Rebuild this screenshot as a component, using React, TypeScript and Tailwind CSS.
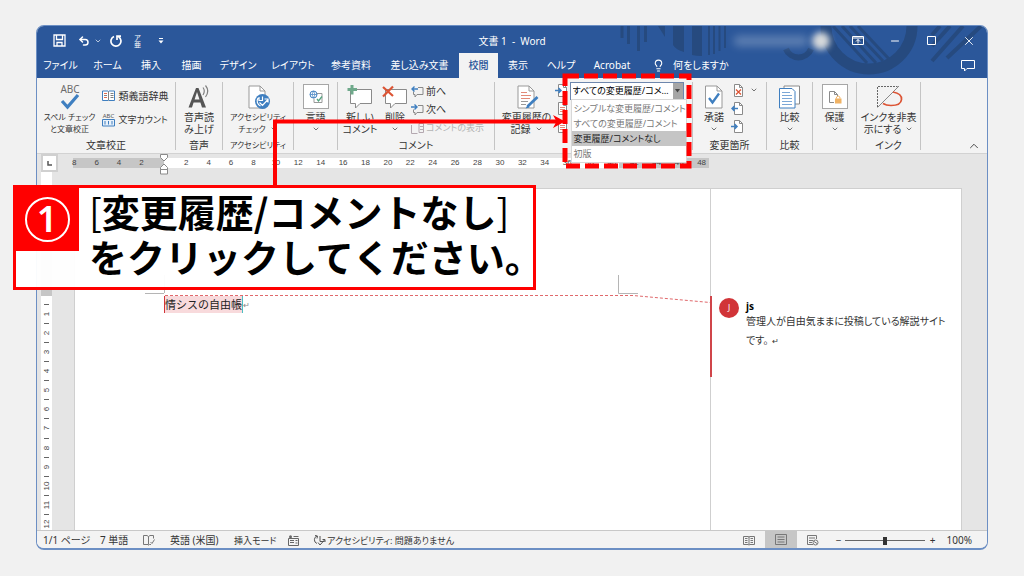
import type { ReactNode } from "react";
import { ChevronDown, ChevronUp, Lightbulb, Minus, RotateCcw, Undo2, X } from "lucide-react";

const tabs = [
  { label: "ファイル", width: "w-[47px]" },
  { label: "ホーム", width: "w-[47px]" },
  { label: "挿入", width: "w-10" },
  { label: "描画", width: "w-[41px]" },
  { label: "デザイン", width: "w-[52px]" },
  { label: "レイアウト", width: "w-[58px]" },
  { label: "参考資料", width: "w-[58px]" },
  { label: "差し込み文書", width: "w-[79px]" },
  { label: "校閲", width: "w-[39px]", active: true },
  { label: "表示", width: "w-10" },
  { label: "ヘルプ", width: "w-[46px]" },
  { label: "Acrobat", width: "w-14" },
];

const rulerMarks = [8, 6, 4, 2, 0, 2, 4, 6, 8, 10, 12, 14, 16, 18, 20, 22, 24, 26, 28, 30, 32, 34, 36, 38, 40, 42, 44, 46, 48];

const views = [
  "シンプルな変更履歴/コメント",
  "すべての変更履歴/コメント",
  "変更履歴/コメントなし",
  "初版",
];

function Group({ label, width, small, children }: { label?: string; width: string; small?: boolean; children: ReactNode }) {
  return (
    <section className={`${width} mt-1 mb-[3px] flex shrink-0 flex-col border-r border-[#c4c4c4]`}>
      <div className="flex min-h-0 flex-1 justify-center">{children}</div>
      <div className={`h-[10px] shrink-0 text-center leading-[10px] ${small ? "text-[8px]" : ""}`}>{label}</div>
    </section>
  );
}

function BigButton({ icon, lines, width, drop, small }: { icon: ReactNode; lines: string[]; width: string; drop?: boolean; small?: boolean }) {
  return (
    <button className={`${width} flex shrink-0 flex-col items-center leading-3 ${small ? "text-[8px]" : ""}`}>
      <span className="flex h-[29px] items-center justify-center">{icon}</span>
      {lines.map((line, i) => (
        <span key={line} className="flex items-center gap-1">
          {line}
          {drop && lines.length > 1 && i === lines.length - 1 && <ChevronDown className="size-2" />}
        </span>
      ))}
      {drop && lines.length === 1 && <ChevronDown className="mt-0.5 size-2" />}
    </button>
  );
}

function FramedIcon({ children }: { children: ReactNode }) {
  return <span className="flex h-[25px] w-[26px] items-center justify-center border border-[#a6a6a6] bg-white">{children}</span>;
}

function SpellIcon() {
  return (
    <svg width="26" height="28" viewBox="0 0 26 28" overflow="visible">
      <text x="13" y="10" textAnchor="middle" fontSize="10" fill="#6b6b6b" fontFamily="Noto Sans">ABC</text>
      <path d="M5 18l5.5 6L21 12" fill="none" stroke="#3f7fc0" strokeWidth="3.2" />
    </svg>
  );
}

function ThesaurusIcon() {
  return (
    <svg width="13" height="12" viewBox="0 0 13 12" fill="none">
      <path d="M.5 1h5.5l.5.5.5-.5h5.500v9.500H7l-.5.5-.5-.5H.5z" fill="#fff" stroke="#3f7fc0" />
      <path d="M6.500 1.500v9M8.500 3.500h3M8.500 5.500h3M8.500 7.500h3" stroke="#808080" />
      <path d="M2 3.500h3M2 7.500h3" stroke="#e06a50" />
      <path d="M2 5.500h3" stroke="#808080" />
    </svg>
  );
}

function CountIcon() {
  return (
    <svg width="13" height="14" viewBox="0 0 13 14" overflow="visible">
      <text x="6.500" y="5" textAnchor="middle" fontSize="6" fill="#555" fontFamily="Noto Sans">ABC</text>
      <path d="M.5 6.500h12v6.500H.5z" fill="#e9f1fa" stroke="#3f7fc0" />
      <path d="M3 8v3.500M6.500 8v3.500M10 8v3.500" stroke="#3f7fc0" />
    </svg>
  );
}

function ReadAloudIcon() {
  return (
    <svg width="26" height="26" viewBox="0 0 26 26">
      <path d="M2.500 23.500L10 4h2.500L20 23.500h-4l-1.600-5H7.600l-1.600 5zM8.600 15.500h4.900L11 8z" fill="#555" />
      <path d="M17 3.500q2.600 3.500 0 7.500M19.500 1.500q4.500 5.500 0 11.500" fill="none" stroke="#808080" strokeWidth="1.200" />
    </svg>
  );
}

function AccessIcon() {
  return (
    <svg width="26" height="26" viewBox="0 0 26 26" fill="none">
      <path d="M4 2h11l5 5v17H4z" fill="#fff" stroke="#999" />
      <path d="M15 2v5h5" stroke="#999" />
      <circle cx="17.500" cy="17.500" r="7.500" fill="#3f7fc0" />
      <path d="M13 14a5.500 5.500 0 0 0 2.500 8M14 13v3.500h3.500v-4M14.500 18.500l3 3 5-5.500M19.500 15h3.500v3.500" stroke="#fff" strokeWidth="1.200" />
    </svg>
  );
}

function LanguageIcon() {
  return (
    <svg width="14" height="13" viewBox="0 0 14 13" fill="none">
      <path d="M7 3.500h6v9H5v-4" stroke="#999" />
      <circle cx="4.500" cy="4.500" r="3.500" fill="#fff" stroke="#3f7fc0" />
      <path d="M1 4.500h7M4.500 1q-3 3.500 0 7M4.500 1q3 3.500 0 7" stroke="#3f7fc0" strokeWidth=".7" />
      <path d="M8 9l1.500 2L13 6.500" stroke="#52a37f" strokeWidth="1.300" />
    </svg>
  );
}

function CommentIcon({ remove }: { remove?: boolean }) {
  return (
    <svg width="26" height="26" viewBox="0 0 26 26" fill="none">
      <path d="M3.500 5.500h21v14H13l-4.500 4.500v-4.500h-5z" fill="#fff" stroke="#8a8a8a" />
      {remove ? (
        <path d="M1 3l10 9M11 2.500L1 12.500" stroke="#dc5434" strokeWidth="2.200" />
      ) : (
        <path d="M5 1v9.500M.5 5.500h9.500" stroke="#6fa98b" strokeWidth="3" />
      )}
    </svg>
  );
}

function StepComment({ next }: { next?: boolean }) {
  return (
    <svg width="13" height="13" viewBox="0 0 13 13" fill="none">
      <path d="M7 2.500h5v7H6l-2 2.500V9.500H2.500V6.500" stroke="#8a8a8a" />
      <path d={next ? "M0 4h6M3.500 1.500L6 4 3.500 6.500" : "M1 4h6M3.500 1.500L1 4l2.500 2.500"} stroke="#3f7fc0" strokeWidth="1.400" />
    </svg>
  );
}

function TrackIcon() {
  return (
    <svg width="26" height="26" viewBox="0 0 26 26" fill="none">
      <path d="M4 2h11l5 5v17H4z" fill="#fff" stroke="#999" />
      <path d="M15 2v5h5M7 17.500h7M7 20.500h5" stroke="#999" />
      <path d="M7 8.500h6M7 11.500h10M7 14.500h9" stroke="#e28a78" />
      <path d="M23.500 13l-10 9.500" stroke="#3f7fc0" strokeWidth="2.800" />
      <path d="M13.500 21l-2 3.500 4-1z" fill="#3f7fc0" />
    </svg>
  );
}

function SmallDoc({ mark }: { mark: "reject" | "prev" | "next" | "lines" }) {
  return (
    <svg width="13" height="13" viewBox="0 0 13 13" fill="none">
      <path d="M3.500.5h5l3 3v9h-8z" fill="#fff" stroke="#8a8a8a" />
      <path d="M8.500.5v3h3" stroke="#8a8a8a" />
      {mark === "reject" && <path d="M5 5.500l5 5M10 5.500l-5 5" stroke="#dc5434" strokeWidth="1.300" />}
      {mark === "prev" && <path d="M1 6.500h6M3.500 4L1 6.500 3.500 9" stroke="#3f7fc0" strokeWidth="1.500" />}
      {mark === "next" && <path d="M0 6.500h6M3.500 4L6 6.500 3.500 9" stroke="#3f7fc0" strokeWidth="1.500" />}
      {mark === "lines" && <path d="M5 5.500h5M5 7.500h5M5 9.500h5" stroke="#e28a78" />}
    </svg>
  );
}

function AcceptIcon() {
  return (
    <svg width="20" height="26" viewBox="0 0 20 26" fill="none">
      <path d="M1.500 2H13l5 5v17H1.500z" fill="#fff" stroke="#999" />
      <path d="M13 2v5h5" stroke="#999" />
      <path d="M5 14l3.500 4.500L15 9.500" stroke="#3f7fc0" strokeWidth="2.300" />
    </svg>
  );
}

function CompareIcon() {
  return (
    <svg width="24" height="26" viewBox="0 0 24 26" fill="none">
      <path d="M6 2h15.500v18H6z" fill="#fff" stroke="#8a8a8a" />
      <path d="M1.500 4.500h12.500l3 3V24H1.500z" fill="#fff" stroke="#3f7fc0" />
      <path d="M4 8.500h8M4 11.500h10M4 14.500h10M4 17.500h10M4 20.500h10" stroke="#7ba7d6" />
    </svg>
  );
}

function ProtectIcon() {
  return (
    <svg width="14" height="14" viewBox="0 0 14 14" fill="none">
      <path d="M6 12.500H1.500V1.500h5l3 3V6M6.500 1.500v3h3" stroke="#8a8a8a" />
      <rect x="7" y="8.500" width="6.500" height="5" fill="#f0b264" />
      <path d="M8.500 8.500V7q1.700-2 3.400 0v1.500" stroke="#f0b264" />
    </svg>
  );
}

function InkIcon() {
  return (
    <svg width="28" height="26" viewBox="0 0 28 26" fill="none">
      <path d="M2.500 23V2.500h20" stroke="#666" strokeDasharray="2 1" />
      <path d="M2.500 23.500L24 2" stroke="#888" />
      <path d="M18 8q9 1.500 8.500 7.500T16 21.500q-5 0-8-2" stroke="#dc5434" strokeWidth="1.700" />
    </svg>
  );
}

function TitleArt() {
  return (
    <svg className="absolute top-0 right-0" width="380" height="52" viewBox="607 26 380 52" fill="none" stroke="#264a7f">
      <path d="M622 26v12M628.500 26v18M638.500 26v25M645.500 26v16" strokeWidth="3" />
      <path d="M658 26h7v11z" fill="#264a7f" stroke="none" />
      <path d="M673 26h11v26q-8-2-11-7zM692 26h10v30q-6 0-10-1z" fill="#264a7f" stroke="none" />
      <path d="M709 26v29M714 26v28M719.500 26v25M725 26v22" strokeWidth="2" />
      <path d="M786 49a13.500 13.500 0 0 0 25 0" strokeWidth="6" />
      <circle cx="869" cy="26" r="43" strokeWidth="11" />
      <path d="M833 26l34 37M842 26l34 37M850 26l33 35M858 26l31 33" strokeWidth="3" />
      <path d="M963 26l-31 35M950 26l-18 20M940 26l-8 9M981 26l-34 32" strokeWidth="4" />
    </svg>
  );
}

function TitleBar() {
  return (
    <header className="relative bg-[#2b579a] text-white">
      <TitleArt />
      <div className="relative grid h-[27px] grid-cols-[1fr_auto_1fr] items-center pt-0.5">
        <div className="flex items-center pl-4">
          <button aria-label="保存">
            <svg width="13" height="13" viewBox="0 0 13 13" fill="none" stroke="#fff" strokeWidth="1.300">
              <path d="M1 1h11v11H1zM3.500 1v4.500h6V1M4 12V8.500h5V12" />
            </svg>
          </button>
          <button className="ml-3" aria-label="元に戻す"><Undo2 className="size-3" strokeWidth={3} /></button>
          <ChevronDown className="ml-1 size-2" />
          <button className="ml-2" aria-label="繰り返し">
            <svg width="12" height="12" viewBox="0 0 12 12" fill="none" stroke="#fff" strokeWidth="1.700">
              <path d="M4 1.500a5 5 0 1 0 4.500.3M7 5V1.200h4" />
            </svg>
          </button>
          <button className="ml-3 flex flex-col items-center text-[7px] leading-[7px]" aria-label="ルビ">
            <span>ア</span>
            <span>亜</span>
          </button>
          <button className="ml-4" aria-label="カスタマイズ">
            <svg width="8" height="8" viewBox="0 0 8 8"><path d="M2 1h4v1H2zM1.500 3.500h5L4 6.500z" fill="#fff" /></svg>
          </button>
        </div>
        <h1 className="pt-px">文書 1&nbsp; -&nbsp; Word</h1>
        <div className="flex items-center justify-end">
          <div className="mr-[9px] flex items-center gap-1">
            <span className="h-[10px] w-[74px] rounded bg-white/25 blur-[4px]" />
            <span className="size-[18px] rounded-full bg-[#d5d8da] blur-[3px]" />
          </div>
          <button className="flex w-[37px] justify-center" aria-label="リボンの表示">
            <svg width="12" height="9" viewBox="0 0 12 9" fill="none" stroke="#fff">
              <path d="M.5.5h11v8H.5zM.5 2h11M6 7.500v-4M4 5.500l2-2 2 2" />
            </svg>
          </button>
          <button className="flex w-[37px] justify-center" aria-label="最小化"><Minus className="size-3" /></button>
          <button className="flex w-[37px] justify-center" aria-label="最大化">
            <svg width="9" height="9" viewBox="0 0 9 9" fill="none" stroke="#fff"><path d="M.5.5h8v8h-8z" /></svg>
          </button>
          <button className="flex w-[37px] justify-center" aria-label="閉じる"><X className="size-[14px]" strokeWidth={1.5} /></button>
        </div>
      </div>
      <nav className="relative flex h-[25px] items-stretch">
        {tabs.map((tab) => (
          <button
            key={tab.label}
            className={`${tab.width} shrink-0 ${tab.active ? "bg-[#f3f3f3] font-medium text-[#2b579a]" : ""}`}
          >
            {tab.label}
          </button>
        ))}
        <button className="flex items-center gap-2 pl-3">
          <Lightbulb className="size-[13px]" />
          何をしますか
        </button>
        <button className="mr-3 ml-auto" aria-label="コメント">
          <svg width="14" height="12" viewBox="0 0 14 12" fill="none" stroke="#fff"><path d="M.5.5h13v8H6l-2.500 2.500V8.500h-3z" /></svg>
        </button>
      </nav>
    </header>
  );
}

function Ribbon() {
  return (
    <div className="flex h-[76px] border-b border-[#d2d2d2] bg-[#f3f3f3]">
      <Group label="文章校正" width="w-[139px]">
        <BigButton icon={<SpellIcon />} lines={["スペル チェック", "と文章校正"]} width="w-16" small />
        <div className="flex w-[73px] flex-col items-start gap-2 pt-1.5">
          <button className="flex h-4 items-center gap-1"><ThesaurusIcon />類義語辞典</button>
          <button className="flex h-4 items-center gap-1 text-[9px]"><CountIcon />文字カウント</button>
        </div>
      </Group>
      <Group label="音声" width="w-[47px]">
        <BigButton icon={<ReadAloudIcon />} lines={["音声読", "み上げ"]} width="w-[46px]" />
      </Group>
      <Group label="アクセシビリティ" width="w-[71px]" small>
        <BigButton icon={<AccessIcon />} lines={["アクセシビリティ", "チェック"]} width="w-[70px]" drop small />
      </Group>
      <Group width="w-11">
        <BigButton icon={<FramedIcon><LanguageIcon /></FramedIcon>} lines={["言語"]} width="w-[43px]" drop />
      </Group>
      <Group label="コメント" width="w-[157px]">
        <BigButton icon={<CommentIcon />} lines={["新しい", "コメント"]} width="w-[38px]" />
        <BigButton icon={<CommentIcon remove />} lines={["削除"]} width="w-8" drop />
        <div className="flex w-20 flex-col items-start">
          <button className="flex h-[18px] shrink-0 items-center gap-0.5"><StepComment />前へ</button>
          <button className="flex h-[18px] shrink-0 items-center gap-0.5"><StepComment next />次へ</button>
          <button className="flex h-5 shrink-0 items-center gap-0.5 text-[9px] text-[#b4b4b4]" disabled>
            <svg width="13" height="11" viewBox="0 0 13 11" fill="none" stroke="#b4a8b0"><path d="M.5 2v8.500h6M8 .5h4.500v9H8zM9 3.500h3M9 6.500h3" /></svg>
            コメントの表示
          </button>
        </div>
      </Group>
      <Group width="w-[198px]">
        <BigButton icon={<TrackIcon />} lines={["変更履歴の", "記録"]} width="w-14" drop />
        <div className="flex flex-col gap-[5px] pt-0.5">
          <SmallDoc mark="next" />
          <SmallDoc mark="lines" />
          <SmallDoc mark="lines" />
        </div>
        <MarkupPicker />
      </Group>
      <Group label="変更箇所" width="w-[74px]">
        <BigButton icon={<AcceptIcon />} lines={["承諾"]} width="w-[34px]" drop />
        <div className="flex flex-col gap-[5px] pt-0.5">
          <SmallDoc mark="reject" />
          <SmallDoc mark="prev" />
          <SmallDoc mark="next" />
        </div>
        <ChevronDown className="mt-1 mr-1 ml-1.5 size-2" />
      </Group>
      <Group label="比較" width="w-[46px]">
        <BigButton icon={<CompareIcon />} lines={["比較"]} width="w-[45px]" drop />
      </Group>
      <Group width="w-11">
        <BigButton icon={<FramedIcon><ProtectIcon /></FramedIcon>} lines={["保護"]} width="w-[43px]" drop />
      </Group>
      <Group label="インク" width="w-16">
        <BigButton icon={<InkIcon />} lines={["インクを非表", "示にする"]} width="w-[63px]" drop />
      </Group>
      <button className="mr-1.5 ml-auto self-end" aria-label="リボンを折りたたむ"><ChevronUp className="size-[14px]" strokeWidth={1.5} /></button>
    </div>
  );
}

function MarkupPicker() {
  return (
    <div className="relative mr-[5px] ml-0.5 h-[18px] w-[114px] shrink-0">
      <select
        aria-label="変更内容の表示"
        className="h-[18px] w-full appearance-none border border-[#6e87ad] bg-white pl-0.5 text-[9px] text-black"
      >
        <option>すべての変更履歴/コメ…</option>
      </select>
      <span className="pointer-events-none absolute top-px right-px flex h-4 w-[10px] items-center justify-center bg-[#a6a6a6]">
        <svg width="5" height="4" viewBox="0 0 5 4"><path d="M0 0h5L2.500 3.500z" fill="#444" /></svg>
      </span>
      <ul role="listbox" className="absolute top-[17px] left-px z-20 w-[116px] border border-[#d8d8d8] bg-white py-px text-[9px] text-[#777]">
        {views.map((view) => (
          <li
            key={view}
            role="option"
            aria-selected={view === views[2]}
            className={`h-[15px] pl-0.5 leading-[15px] ${view === views[2] ? "bg-[#c5c5c5] text-[#222]" : ""}`}
          >
            {view}
          </li>
        ))}
      </ul>
    </div>
  );
}

function HorizontalRuler() {
  return (
    <div className="flex h-[18px] items-start pl-1">
      <div className="flex h-[18px] w-[17px] items-center justify-center border-2 border-[#d0d0d0] bg-white">
        <svg width="5" height="5" viewBox="0 0 5 5"><path d="M1 0v4h4" fill="none" stroke="#555" strokeWidth="1.500" /></svg>
      </div>
      <div className="relative mt-1 ml-[15px] flex h-[10px] w-[636px] text-[8px] leading-[10px] text-[#444]">
        <div className="w-[91px] bg-[#c6c6c6]" />
        <div className="flex-1 bg-white" />
        <div className="w-[90px] bg-[#c6c6c6]" />
        <div className="absolute inset-y-0 -right-1 -left-[10px] flex font-['Liberation_Sans']">
          {rulerMarks.map((n, i) => (
            <span key={i} className="flex flex-1 justify-center">
              {n !== 0 ? n : (
                <svg className="-mt-1 shrink-0" width="8" height="21" viewBox="0 0 8 21" fill="#fff" stroke="#8a8a8a">
                  <path d="M.5.500h7v3L4 7 .5 3.500zM4 10l3.500 3.500v2h-7v-2zM.5 15.500h7v4.500h-7z" />
                </svg>
              )}
            </span>
          ))}
        </div>
      </div>
    </div>
  );
}

function VerticalRuler() {
  return (
    <div className="ml-1 flex w-[11px] flex-col bg-white pt-4">
      <div className="h-[108px] shrink-0 bg-[#c6c6c6]" />
      <div className="flex h-[233px] shrink-0 flex-col pt-1 font-['Liberation_Sans'] text-[8px] text-[#444]">
        {[1, 2, 3, 4, 5, 6, 7, 8, 9, 10, 11, 12].map((n) => (
          <div key={n} className="flex flex-1 flex-col items-center">
            <span className="mt-1 h-px w-[5px] shrink-0 bg-[#666]" />
            <span className="mt-1 flex h-[10px] w-[10px] shrink-0 -rotate-90 items-center justify-center">{n}</span>
          </div>
        ))}
      </div>
    </div>
  );
}

function Page() {
  return (
    <main className="relative mt-4 mr-[25px] ml-[22px] flex flex-1 border border-b-0 border-[#cfcfcf] bg-white">
      <svg className="absolute top-0 left-0" width="640" height="190" viewBox="0 0 640 190" fill="none">
        <path d="M70 104.500h19M89.500 86v18M543.500 86v18.500H563" stroke="#b5b5b5" />
        <path d="M90 106.500h468l77 7" stroke="#e0696c" strokeDasharray="3 2" />
      </svg>
      <div className="flex-1 pt-[107px] pl-[89px]">
        <p className="flex text-[11px] leading-[17px] text-[#222] [font-feature-settings:normal]">
          <span className="border-r border-l border-l-[#d13438] border-r-[#4bbfc3] bg-[#f8dadc]">情シスの自由帳</span>
          <span className="text-[8px] text-[#888]">↵</span>
        </p>
      </div>
      <aside className="w-[251px] border-l border-[#cfcfcf] pt-[107px]">
        <div className="-ml-px flex h-[81px] border-l-2 border-[#d0454a] pl-[7px]">
          <span className="mt-0.5 flex size-5 shrink-0 items-center justify-center rounded-full bg-[#d13438] text-[8px] text-white">J</span>
          <div className="pl-[7px]">
            <p className="pt-1 leading-3 font-bold text-black">js</p>
            <p className="leading-[19px] text-[#333]">
              管理人が自由気ままに投稿している解説サイト
              <br />
              です。<span className="pl-1 text-[8px]">↵</span>
            </p>
          </div>
        </div>
      </aside>
    </main>
  );
}

function StatusBar() {
  return (
    <footer className="flex h-[18px] items-center border-t border-[#c8c8c8] bg-[#f3f3f3] pt-0.5 pl-1.5 text-[#333]">
      <span className="w-[57px]">1/1 ページ</span>
      <span className="w-[43px]">7 単語</span>
      <svg className="mr-[15px]" width="12" height="11" viewBox="0 0 12 11" fill="none" stroke="#777">
        <path d="M5.500 9.500v-8L4 .5H.5v9H4zM5.500 1.500L7 .5h3.500v3M5.500 10.500l1-1H8M7.500 7l1.500 1.500 2.500-4" />
      </svg>
      <span className="w-16">英語 (米国)</span>
      <span className="w-[54px] text-[9px]">挿入モード</span>
      <svg className="mr-[14px]" width="11" height="11" viewBox="0 0 11 11" fill="none" stroke="#666">
        <path d="M.5 3.500h10v7H.5zM2 5.500h4M2 7.500h4M7.500 5.500h2M7.500 8h2" />
        <circle cx="2.500" cy="1.800" r="1.500" fill="#666" stroke="none" />
        <path d="M5.500 1.500h5" />
      </svg>
      <svg className="mr-px" width="13" height="11" viewBox="0 0 13 11" fill="none" stroke="#555">
        <path d="M4 1a4 4 0 0 0 0 7.500M2 .5l2.500.5L4 3.500M7 1v5.500h4.500M5 7.500l2 2.500 4.500-5M9.500 4.500h2.500V7" />
      </svg>
      <span className="flex-1 text-[9px]">アクセシビリティ: 問題ありません</span>
      <button className="flex w-8 justify-center" aria-label="閲覧モード">
        <svg width="12" height="11" viewBox="0 0 12 11" fill="none" stroke="#777"><path d="M.5 1.500H5l1 .5 1-.5h4.500v8H7l-1 .5-1-.5H.5zM6 1.500v8M2 3.500h2.500M2 5.500h2.500M2 7.500h2.500M7.500 3.500H10M7.500 5.500H10M7.500 7.500H10" /></svg>
      </button>
      <button className="-mt-0.5 flex w-8 items-center justify-center self-stretch bg-[#c6c6c6]" aria-label="印刷レイアウト">
        <svg width="12" height="11" viewBox="0 0 12 11" fill="none" stroke="#777"><path d="M.5.5h11v10H.5zM2.500 3h7M2.500 5.500h7M2.500 8h7" /></svg>
      </button>
      <button className="flex w-8 justify-center" aria-label="Web レイアウト">
        <svg width="12" height="11" viewBox="0 0 12 11" fill="none" stroke="#777"><path d="M6 9.500H.5v-9h9V4M2 3h6M2 5.500h4M2 7.500h3" /><circle cx="8.500" cy="7.500" r="2.500" /><path d="M7 6.500l3 2" /></svg>
      </button>
      <button className="ml-1 w-3">−</button>
      <div className="relative flex h-3 w-20 items-center">
        <input type="range" aria-label="ズーム" defaultValue={50} className="absolute inset-0 w-full opacity-0" />
        <span className="pointer-events-none h-px w-full bg-[#666]" />
        <span className="pointer-events-none absolute left-[38px] h-2 w-1 bg-[#333]" />
      </div>
      <button className="ml-0.5 w-3">+</button>
      <span className="mr-[15px] ml-2">100%</span>
    </footer>
  );
}

function Callout() {
  return (
    <>
      <svg className="pointer-events-none absolute top-[70px] left-[265px] z-30" width="430" height="120" viewBox="265 70 430 120" fill="none" stroke="#f00">
        <path d="M275 187V121.500h284" strokeWidth="4" />
        <path d="M565 121.500L553 115l3.500 6.500L553 128z" fill="#f00" stroke="none" />
        <path d="M565 76h124v90H565z" strokeWidth="5" strokeDasharray="14 5" />
      </svg>
      <div className="absolute top-[185px] left-[13px] z-30 flex h-[105px] w-[523px] border-[3px] border-[#f00] bg-white/96">
        <div className="-mt-px -ml-px flex h-16 w-16 shrink-0 items-center justify-center bg-[#f00]">
          <span className="flex size-[45px] items-center justify-center rounded-full border-2 border-white font-['Noto_Sans'] text-[36px] leading-none font-semibold text-white">1</span>
        </div>
        <p className="pl-[10px] text-[38px] leading-[45px] font-bold whitespace-nowrap text-black [font-family:'Noto_Sans_CJK_JP',sans-serif] [font-feature-settings:normal]">
          <span className="font-normal">[</span>変更履歴/コメントなし<span className="font-normal">]</span>
          <br />
          をクリックしてください。
        </p>
      </div>
    </>
  );
}

export default function App() {
  return (
    <div className="relative flex h-screen flex-col bg-[#f1f1f1] px-9 pt-[25px] pb-[26px] text-[10px] whitespace-nowrap text-[#333] [font-family:'Noto_Sans','Noto_Sans_CJK_JP',sans-serif] [font-feature-settings:'palt']">
      <div className="flex flex-1 flex-col overflow-hidden rounded-lg border border-b-2 border-[#6c8fc4] bg-[#e5e5e5]">
        <TitleBar />
        <Ribbon />
        <HorizontalRuler />
        <div className="flex min-h-0 flex-1 overflow-hidden">
          <VerticalRuler />
          <Page />
        </div>
        <StatusBar />
      </div>
      <Callout />
    </div>
  );
}
